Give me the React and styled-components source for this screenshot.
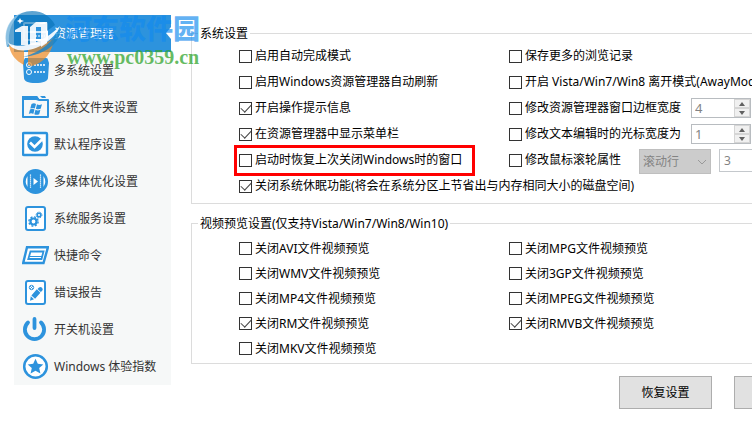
import React, { useId, useState } from 'react'
import styled, { createGlobalStyle } from 'styled-components'

const BLUE = '#2d93dd'

const GlobalStyle = createGlobalStyle`
    * {
        box-sizing: border-box;
    }
    body {
        margin: 0;
        overflow: hidden;
        background: #fff;
    }
    body, button, input, select {
        font-family: "Noto Sans", "Noto Sans CJK SC", sans-serif;
        font-size: 12px;
        line-height: 16px;
        color: #000;
    }
`

const Window = styled.div`
    position: relative;
    display: flex;
    align-items: flex-start;
    gap: 20px;
    width: 100%;
    min-width: 840px;
    padding: 15px 13px 20px 14px;
`
const Sidebar = styled.nav`
    flex: 0 0 157px;
    display: flex;
    flex-direction: column;
    background: #f6f8f8;
`
const NavLink = styled.a`
    position: relative;
    display: flex;
    align-items: center;
    gap: 5px;
    height: 37px;
    padding-left: 8px;
    color: ${props => props.$active ? '#fff' : '#333'};
    background: ${props => props.$active ? BLUE : 'transparent'};
    text-decoration: none;
    white-space: nowrap;
`
const Notch = styled.span`
    position: absolute;
    right: 0;
    top: 12px;
    border: solid transparent;
    border-width: 6px 5px 6px 0;
    border-right-color: #fff;
`
const NavIcon = styled.svg`
    flex: none;
    width: 27px;
    height: 27px;
    color: ${props => props.$active ? '#fff' : BLUE};
`
const Main = styled.main`
    flex: 1 1 auto;
    padding-top: 10px;
`
const Group = styled.fieldset`
    margin: 0 0 11px;
    padding: 0 6px 2px;
    border: 1px solid #dcdcdc;
`
const Legend = styled.legend`
    height: 17px;
    padding: 0 2px;
    line-height: 17px;
`
const Options = styled.div`
    display: grid;
    grid-template-columns: 270px 1fr;
    grid-auto-rows: ${props => props.$roomy ? 26 : 25}px;
    padding: ${props => props.$roomy ? '1px 0 2px 41px' : '4px 0 0 41px'};
`
const Option = styled.div`
    display: flex;
    align-items: center;
    gap: ${props => props.$gap || 10}px;
    grid-column: ${props => props.$wide ? '1 / -1' : 'auto'};
    white-space: nowrap;
`
const CheckLabel = styled.label`
    position: relative;
    display: flex;
    align-items: center;
    gap: 3px;
    height: 26px;
`
const Highlight = styled.span`
    position: absolute;
    inset: -2px -13px -3px -5px;
    border: 3px solid #f00;
    pointer-events: none;
`
const CheckBox = styled.input`
    appearance: none;
    display: grid;
    place-items: center;
    width: 13px;
    height: 13px;
    margin: 0;
    border: 1px solid #333;
    background: #fff;
    &:checked::before {
        content: "";
        width: 9px;
        height: 5px;
        margin-bottom: 3px;
        border: solid #444;
        border-width: 0 0 1px 1px;
        transform: rotate(-47deg);
    }
`
const Stepper = styled.div`
    display: flex;
    width: 60px;
    height: 20px;
    border: 1px solid #b8bcc0;
    background: #fff;
`
const StepInput = styled.input`
    flex: 1 1 0;
    min-width: 0;
    padding: 0 0 0 3px;
    border: 0;
    font-size: 13px;
    color: #838383;
    background: none;
`
const StepButtons = styled.div`
    display: grid;
    grid-template-rows: 1fr 1fr;
    width: 16px;
    background: #fff;
`
const StepButton = styled.button`
    display: grid;
    place-items: center;
    padding: 0;
    border: 1px solid #d5d5d5;
    background: #f0f0f0;
`
const SelectBox = styled.div`
    position: relative;
    width: 72px;
    height: 25px;
`
const Select = styled.select`
    appearance: none;
    width: 100%;
    height: 100%;
    padding: 0 3px;
    border: 1px solid #bfbfbf;
    border-radius: 0;
    color: #838383;
    background: #ccc;
    opacity: 1;
`
const Chevron = styled.svg`
    position: absolute;
    right: 4px;
    top: 10px;
    pointer-events: none;
`
const Controls = styled.div`
    display: flex;
    gap: 8px;
    align-items: flex-start;
    padding-top: 3px;
`
const LinesInput = styled.input`
    width: 62px;
    height: 23px;
    padding: 0 4px;
    border: 1px solid #c4c8cc;
    color: #838383;
    background: #fff;
`
const Footer = styled.div`
    display: flex;
    justify-content: flex-end;
    gap: 22px;
    padding-top: 1px;
`
const Button = styled.button`
    width: 93px;
    height: 33px;
    padding: 0;
    border: 1px solid #adadad;
    background: #e1e1e1;
`
const Watermark = styled.div`
    position: absolute;
    left: 4px;
    top: 10px;
    display: flex;
    gap: 3px;
    pointer-events: none;
`
const WatermarkText = styled.div`
    display: flex;
    flex-direction: column;
    padding-top: 4px;
`
const SiteName = styled.span`
    font-size: 27px;
    line-height: 30px;
    font-weight: 900;
    color: rgba(18, 138, 238, 0.66);
`
const SiteUrl = styled.span`
    padding-left: 2px;
    font-family: "Liberation Serif", serif;
    font-size: 20px;
    line-height: 26px;
    font-weight: bold;
    color: rgba(52, 166, 48, 0.75);
`

const icons = {
    explorer: (
        <>
            <rect x="2" y="3" width="23" height="17" rx="1" fill="none" stroke="currentColor" strokeWidth="2" />
            <path d="M2 12h23M9 24h9" stroke="currentColor" strokeWidth="1.5" />
            <path d="M13 16h10" stroke="currentColor" strokeDasharray="2 1" />
        </>
    ),
    systems: (
        <>
            <path fill="currentColor" d="M3 1h21a2 2 0 0 1 2 2l1 3-1 15c0 3-5 5-12.500 5S2 24 2 21L1 6l1-3z" />
            <circle cx="7" cy="8" r="2.500" fill="none" stroke="#fff" />
            <circle cx="7" cy="15" r="2.500" fill="none" stroke="#fff" />
            <circle cx="7" cy="8" r="1" fill="#fff" />
            <path d="M12 8h12M12 15h12" stroke="#fff" strokeWidth="1.500" strokeDasharray="2 1" />
        </>
    ),
    folder: (
        <>
            <path fill="currentColor" fillRule="evenodd" d="M0 3q0-1 1-1h14l2 3h9q1 0 1 1v17q0 1-1 1H1q-1 0-1-1zM2 7v15h23V7h-8l-3-1H2z" />
            <path fill="currentColor" d="M0 2h15l3 4H0zM18 2h5l1 2h-4z" />
            <path fill="currentColor" d="M9.500 10q2.500-1.500 4.500 0l-1.200 4.500q-2-1.200-4.500 0zM15 10.300q2 1.200 5 0l-1.300 4.500q-2.600 1-4.800-.1zM8 15.500q2.300-1.400 4.500 0l-1.200 4.500q-2.200-1.300-4.500 0zM13.500 15.800q2.200 1.200 4.900 0l-1.200 4.500q-2.700 1.100-4.900-.1z" />
        </>
    ),
    defaults: (
        <>
            <rect x="1" y="2" width="24" height="22" rx="1" fill="#fff" stroke="currentColor" strokeWidth="2.400" />
            <circle cx="13" cy="13" r="7.800" fill="currentColor" />
            <path d="M8 11.500l4.500 4.500 7.500-7.500" fill="none" stroke="#fff" strokeWidth="2.600" />
        </>
    ),
    media: (
        <>
            <circle cx="13.500" cy="13.500" r="12.500" fill="currentColor" />
            <path d="M5.500 8q-3.500 5.500 0 11zM21.500 8q3.500 5.500 0 11z" fill="#fff" />
            <path d="M8.500 6.500v14M18.500 6.500v14" stroke="#fff" strokeWidth="1.200" strokeDasharray="1.200 .8" />
            <path d="M11.500 10l4.500 3.500-4.500 3.500z" fill="#fff" />
        </>
    ),
    services: (
        <>
            <rect x="4" y="2" width="19" height="23" rx="2" fill="#fff" stroke="currentColor" strokeWidth="2" />
            <circle cx="11.500" cy="16.500" r="3" fill="none" stroke="currentColor" strokeWidth="2.200" />
            <circle cx="11.500" cy="16.500" r="4.600" fill="none" stroke="currentColor" strokeWidth="1.400" strokeDasharray="2 1.600" />
            <circle cx="17" cy="10" r="1.800" fill="none" stroke="currentColor" strokeWidth="1.500" />
            <circle cx="17" cy="10" r="2.900" fill="none" stroke="currentColor" strokeDasharray="1.300 1" />
        </>
    ),
    commands: (
        <>
            <path d="M5 5.200h21L21.500 21H1.200z" fill="#fff" stroke="currentColor" strokeWidth="2.400" />
            <path d="M8.500 9.500h13L19.500 17H6.300z" fill="none" stroke="currentColor" strokeWidth="1.800" />
            <path d="M8 14.500h12" stroke="currentColor" />
        </>
    ),
    report: (
        <>
            <rect x="4" y="2" width="19" height="23" rx="2" fill="#fff" stroke="currentColor" strokeWidth="2" />
            <circle cx="9.500" cy="8.500" r="2.200" fill="none" stroke="currentColor" />
            <path d="M8 7l3 3M11 7l-3 3" stroke="currentColor" strokeWidth=".8" />
            <path fill="currentColor" d="M17 8.500q1.500-1.300 3 .2t.2 3L18.800 13 15.500 10zM14.800 10.300l3.600 3.400-5.300 6-3.700-3.300zM8.800 17.300l3.200 3-4 1.500z" />
        </>
    ),
    power: (
        <>
            <path d="M6 6.500a9.600 9.600 0 1 0 13 0" fill="none" stroke="currentColor" strokeWidth="3.800" strokeLinecap="round" />
            <path d="M12.500 3v9" stroke="currentColor" strokeWidth="3.800" strokeLinecap="round" />
        </>
    ),
    rating: (
        <>
            <circle cx="13.500" cy="13.500" r="11.300" fill="#fff" stroke="currentColor" strokeWidth="2.500" />
            <path fill="currentColor" d="M13.500 5.800l2.300 5 5.500.6-4.100 3.700 1.200 5.500-4.900-2.800-4.900 2.800 1.200-5.500-4.100-3.700 5.500-.6z" />
        </>
    ),
}

const navItems = [
    { icon: 'explorer', text: '资源管理器' },
    { icon: 'systems', text: '多系统设置' },
    { icon: 'folder', text: '系统文件夹设置' },
    { icon: 'defaults', text: '默认程序设置' },
    { icon: 'media', text: '多媒体优化设置' },
    { icon: 'services', text: '系统服务设置' },
    { icon: 'commands', text: '快捷命令' },
    { icon: 'report', text: '错误报告' },
    { icon: 'power', text: '开关机设置' },
    { icon: 'rating', text: 'Windows 体验指数' },
]

// laid out row by row, two columns
const systemOptions = [
    { text: '启用自动完成模式' },
    { text: '保存更多的浏览记录' },
    { text: '启用Windows资源管理器自动刷新' },
    { text: '开启 Vista/Win7/Win8 离开模式(AwayMode)' },
    { text: '开启操作提示信息', checked: true },
    { text: '修改资源管理器窗口边框宽度', stepper: 4 },
    { text: '在资源管理器中显示菜单栏', checked: true },
    { text: '修改文本编辑时的光标宽度为', stepper: 1 },
    { text: '启动时恢复上次关闭Windows时的窗口', highlight: true },
    { text: '修改鼠标滚轮属性', wheel: true },
    { text: '关闭系统休眠功能(将会在系统分区上节省出与内存相同大小的磁盘空间)', checked: true, wide: true },
]
const videoOptions = [
    { text: '关闭AVI文件视频预览' },
    { text: '关闭MPG文件视频预览' },
    { text: '关闭WMV文件视频预览' },
    { text: '关闭3GP文件视频预览' },
    { text: '关闭MP4文件视频预览' },
    { text: '关闭MPEG文件视频预览' },
    { text: '关闭RM文件视频预览', checked: true },
    { text: '关闭RMVB文件视频预览', checked: true },
    { text: '关闭MKV文件视频预览' },
]

const NumberStepper = ({ value, label }) => (
    <Stepper>
        <StepInput type="text" inputMode="numeric" defaultValue={value} aria-label={label} disabled />
        <StepButtons>
            <StepButton type="button" aria-label="+" disabled>
                <svg width="6" height="4"><path d="M0 4l3-4 3 4z" fill="#606060" /></svg>
            </StepButton>
            <StepButton type="button" aria-label="-" disabled>
                <svg width="6" height="4"><path d="M0 0l3 4 3-4z" fill="#606060" /></svg>
            </StepButton>
        </StepButtons>
    </Stepper>
)

const WheelControls = ({ label }) => (
    <Controls>
        <SelectBox>
            <Select aria-label={label} disabled>
                <option>滚动行</option>
            </Select>
            <Chevron width="10" height="6">
                <path d="M1 1l4 4 4-4" fill="none" stroke="#999" />
            </Chevron>
        </SelectBox>
        <LinesInput type="text" defaultValue="3" aria-label={label} disabled />
    </Controls>
)

const CheckOption = ({ option }) => {
    const id = useId()
    const [checked, setChecked] = useState(!!option.checked)
    return (
        <Option $wide={option.wide} $gap={option.wheel ? 18 : 10}>
            <CheckLabel htmlFor={id}>
                <CheckBox id={id} type="checkbox" checked={checked} onChange={() => setChecked(!checked)} />
                {option.text}
                {option.highlight && <Highlight />}
            </CheckLabel>
            {option.stepper && <NumberStepper value={option.stepper} label={option.text} />}
            {option.wheel && <WheelControls label={option.text} />}
        </Option>
    )
}

const OptionGroup = ({ title, options, roomy }) => (
    <Group>
        <Legend>{title}</Legend>
        <Options $roomy={roomy}>
            {options.map(option => <CheckOption key={option.text} option={option} />)}
        </Options>
    </Group>
)

const SiteMark = () => (
    <Watermark>
        <svg width="58" height="58" viewBox="0 0 58 58">
            <path d="M3 37C-2 17 11 1 28 1c11 0 19 6 23 14l-8 6-2-9-11 3-4 3v17L9 36z" fill="#0873b8" opacity=".65" />
            <path d="M5 35c5 4 11 5 15 4v16C12 51 6 44 5 35zM24 39c9-1 17-5 26-11-1 14-10 25-22 28l-4-1z" fill="#f08a24" opacity=".7" />
            <path d="M56 16c3 14-12 29-37 31 18-5 31-15 37-31z" fill="#1684cc" opacity=".8" />
            <path d="M11 20l7-4h6v19h-7V22h-6zM26 17l6-5h11v21l-6 4V17h-5v18h-6z" fill="#fff" opacity=".9" />
            <path d="M3 31c6 9 32 6 53-15C47 38 11 50 3 31z" fill="#fff" opacity=".9" />
            <path d="M3 36C-2 22 6 7 17 3 8 11 4 21 5 33z" fill="#9fcdea" opacity=".7" />
            <path d="M16 8l1 2 3 1-3 1-1 2-1-2-2-1 2-1z" fill="#fff" />
        </svg>
        <WatermarkText>
            <SiteName>河东软件园</SiteName>
            <SiteUrl>www.pc0359.cn</SiteUrl>
        </WatermarkText>
    </Watermark>
)

const App = () => {
    const [active, setActive] = useState('explorer')
    return (
        <>
            <GlobalStyle />
            <Window>
                <Sidebar>
                    {navItems.map(({ icon, text }) => (
                        <NavLink key={icon} href={`#${icon}`} $active={icon === active} onClick={() => setActive(icon)}>
                            <NavIcon viewBox="0 0 27 27" $active={icon === active}>{icons[icon]}</NavIcon>
                            {text}
                            {icon === active && <Notch />}
                        </NavLink>
                    ))}
                </Sidebar>
                <Main>
                    <OptionGroup title="系统设置" options={systemOptions} roomy />
                    <OptionGroup title="视频预览设置(仅支持Vista/Win7/Win8/Win10)" options={videoOptions} />
                    <Footer>
                        <Button type="button">恢复设置</Button>
                        <Button type="button">保存设置</Button>
                    </Footer>
                </Main>
                <SiteMark />
            </Window>
        </>
    )
}

export default App
